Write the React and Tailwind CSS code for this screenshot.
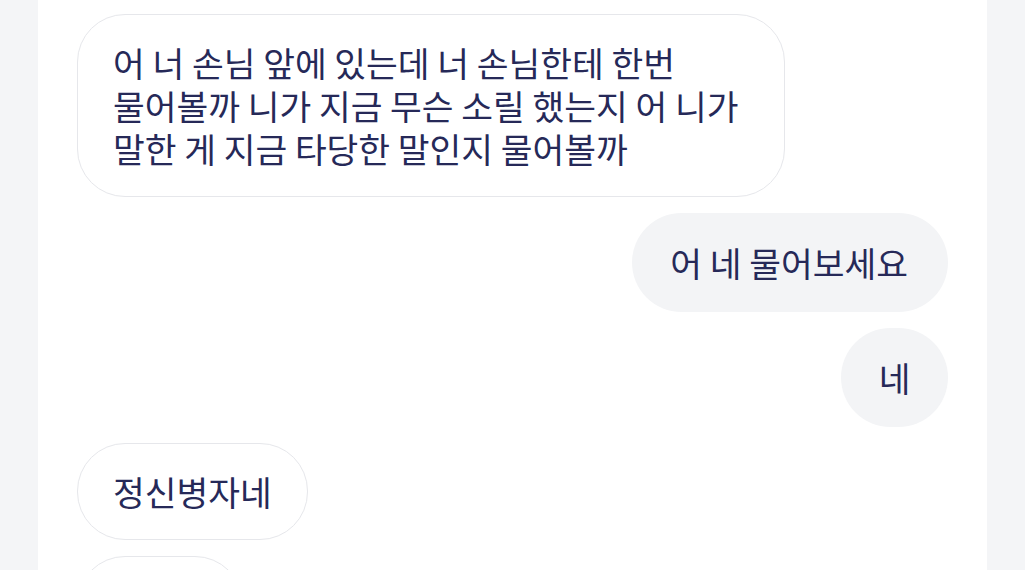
import React from "react";

const font = { fontFamily: '"Noto Sans CJK KR", "Noto Sans", sans-serif' };

function Left({ children, className = "" }) {
  return (
    <div className="flex justify-start">
      <div
        className={`bg-white border-[1.5px] border-[#e6e7eb] rounded-[48px] px-[35px] py-[26px] text-[34.5px] leading-[43px] text-[#262958] ${className}`}
      >
        {children}
      </div>
    </div>
  );
}

function Right({ children, className = "" }) {
  return (
    <div className="flex justify-end">
      <div
        className={`bg-[#f3f4f6] rounded-[50px] pl-[38px] pr-[40px] py-[28px] text-[34.5px] leading-[43px] text-[#262958] ${className}`}
      >
        {children}
      </div>
    </div>
  );
}

export default function App() {
  return (
    <div className="w-[1025px] h-[570px] overflow-hidden bg-[#f4f5f7] flex" style={font}>
      <div className="ml-[38px] w-[949px] bg-white px-[39px] pt-[14px] flex flex-col gap-[16px]">
        <Left className="w-[708px]">
          어 너 손님 앞에 있는데 너 손님한테 한번
          <br />
          물어볼까 니가 지금 무슨 소릴 했는지 어 니가
          <br />
          말한 게 지금 타당한 말인지 물어볼까
        </Left>
        <Right>어 네 물어보세요</Right>
        <Right className="w-[107px] !px-0 text-center">네</Right>
        <Left>정신병자네</Left>
        <div className="flex justify-start">
          <div className="w-[166px] h-[97px] shrink-0 bg-white border-[1.5px] border-[#e6e7eb] rounded-[48px]" />
        </div>
      </div>
    </div>
  );
}
